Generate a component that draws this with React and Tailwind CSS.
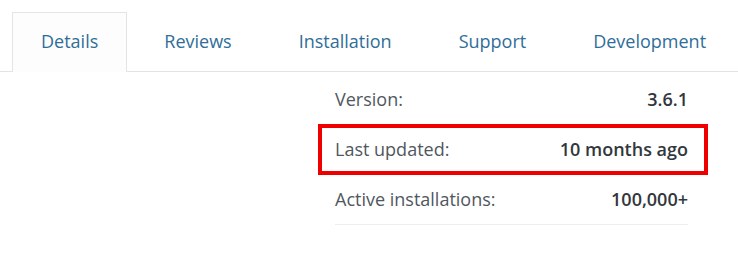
const TABS = ["Details", "Reviews", "Installation", "Support", "Development"];

const META = [
  { label: "Version:", value: "3.6.1" },
  { label: "Last updated:", value: "10 months ago", marked: true },
  { label: "Active installations:", value: "100,000+" },
];

export default function App() {
  return (
    <div
      className="w-[738px] h-[258px] bg-white overflow-hidden"
      style={{ fontFamily: "'Open Sans', 'Noto Sans', sans-serif" }}
    >
      {/* tab strip */}
      <div className="pt-3 pl-3 flex border-b border-[#e2e4e7] h-[72px]">
        {TABS.map((t, i) => (
          <div
            key={t}
            className={
              i === 0
                ? "h-[60px] px-[28px] pb-[2px] flex items-center border border-b-0 border-[#e2e4e7] bg-[#fdfdfd] -mb-px text-[18px] text-[#2f6e98]"
                : "h-[60px] ml-[7px] px-[30px] pb-[2px] flex items-center text-[18px] text-[#2f6e98]"
            }
          >
            {t}
          </div>
        ))}
      </div>

      {/* plugin meta */}
      <div className="ml-[335px] w-[353px] mt-[3px]">
        {META.map((m) => (
          <div
            key={m.label}
            className="relative h-[50px] flex items-center justify-between border-b border-[#eeeeee] text-[18px]"
          >
            <span className="text-[#50575e]">{m.label}</span>
            <span className="font-semibold text-[#32373c]">{m.value}</span>
            {m.marked && (
              <div className="absolute left-[-17px] right-[-20px] top-[-1px] bottom-[-1px] border-4 border-[#ee0000]" />
            )}
          </div>
        ))}
      </div>
    </div>
  );
}
